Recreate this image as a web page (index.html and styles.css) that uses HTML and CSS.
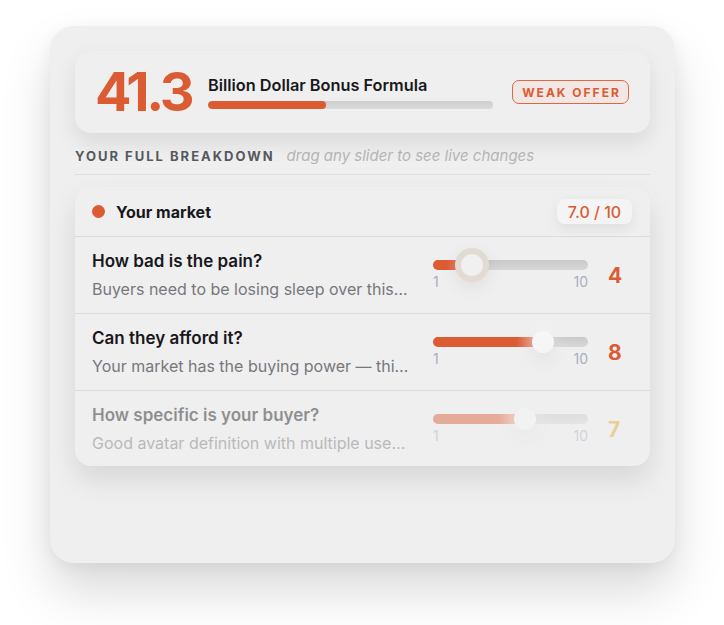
FILE: index.html
```html
<!DOCTYPE html>
<html lang="en">
<head>
<meta charset="utf-8">
<title>Billion Dollar Bonus Formula</title>
<link rel="stylesheet" href="styles.css">
</head>
<body>
<div class="page">
  <div class="panel">
    <div class="score-card">
      <div class="score">41.3</div>
      <div class="score-mid">
        <div class="score-title">Billion Dollar Bonus Formula</div>
        <div class="bar"><div class="bar-fill" style="width:41.3%"></div></div>
      </div>
      <div class="badge">WEAK OFFER</div>
    </div>

    <div class="section-head">
      <span class="section-label">YOUR FULL BREAKDOWN</span>
      <span class="section-hint">drag any slider to see live changes</span>
    </div>

    <div class="group">
      <div class="group-head">
        <span class="dot"></span>
        <span class="group-name">Your market</span>
        <span class="group-score">7.0 / 10</span>
      </div>

      <div class="row">
        <div class="row-text">
          <div class="row-title">How bad is the pain?</div>
          <div class="row-sub">Buyers need to be losing sleep over this…</div>
        </div>
        <div class="slider">
          <div class="track">
            <div class="fill" style="width:25%"></div>
            <div class="thumb thumb-active" style="left:25%"></div>
          </div>
          <div class="ticks"><span>1</span><span>10</span></div>
        </div>
        <div class="value">4</div>
      </div>

      <div class="row">
        <div class="row-text">
          <div class="row-title">Can they afford it?</div>
          <div class="row-sub">Your market has the buying power — thi…</div>
        </div>
        <div class="slider">
          <div class="track">
            <div class="fill" style="width:71%"></div>
            <div class="thumb" style="left:71%"></div>
          </div>
          <div class="ticks"><span>1</span><span>10</span></div>
        </div>
        <div class="value">8</div>
      </div>

      <div class="row row-dim">
        <div class="row-text">
          <div class="row-title">How specific is your buyer?</div>
          <div class="row-sub">Good avatar definition with multiple use…</div>
        </div>
        <div class="slider">
          <div class="track">
            <div class="fill" style="width:59.4%"></div>
            <div class="thumb" style="left:59.4%"></div>
          </div>
          <div class="ticks"><span>1</span><span>10</span></div>
        </div>
        <div class="value value-amber">7</div>
      </div>
    </div>
  </div>
</div>
</body>
</html>
```

FILE: styles.css
```css
* { box-sizing: border-box; }

html, body {
  margin: 0;
  padding: 0;
  background: #ffffff;
}

body {
  font-family: Inter, "Noto Sans", "Liberation Sans", sans-serif;
  color: #1b1b1f;
}

.page {
  padding: 26px 0 62px 50px;
}

.panel {
  width: 625px;
  height: 537px;
  background: #efefef;
  border-radius: 24px;
  padding: 25px 25px;
  box-shadow: 0 28px 50px rgba(0, 0, 0, 0.15), 0 4px 16px rgba(0, 0, 0, 0.05);
}

/* score card */
.score-card {
  height: 82px;
  display: flex;
  align-items: center;
  padding: 0 21px 0 20px;
  background: #efefef;
  border-radius: 16px;
  box-shadow: 0 10px 22px rgba(0, 0, 0, 0.09);
}

.score {
  font-size: 54px;
  font-weight: 700;
  letter-spacing: -0.06em;
  line-height: 1;
  color: #db5b33;
  width: 95px;
  white-space: nowrap;
}

.score-mid {
  flex: 1;
  margin: 0 19px 0 18px;
}

.score-title {
  font-size: 16.3px;
  font-weight: 600;
  line-height: 20px;
  color: #18181c;
}

.bar {
  margin-top: 6px;
  height: 8px;
  border-radius: 4px;
  background: linear-gradient(180deg, #cdcdcd, #dadada);
  overflow: hidden;
}

.bar-fill {
  height: 100%;
  border-radius: 4px;
  background: #db5b33;
}

.badge {
  width: 117px;
  height: 24px;
  border: 1px solid #de6744;
  border-radius: 7px;
  background: #f1e7e4;
  color: #db5b33;
  font-size: 12px;
  font-weight: 700;
  letter-spacing: 2px;
  display: flex;
  align-items: center;
  justify-content: center;
  padding-left: 2px;
}

/* section header */
.section-head {
  margin-top: 15px;
  padding-bottom: 10px;
  border-bottom: 1px solid #dedede;
  display: flex;
  align-items: baseline;
  gap: 12px;
  line-height: 16px;
}

.section-label {
  font-size: 13px;
  font-weight: 700;
  letter-spacing: 2px;
  color: #55585e;
}

.section-hint {
  font-size: 15px;
  font-style: italic;
  color: #b4b4b4;
}

/* group card */
.group {
  margin-top: 12px;
  background: #efefef;
  border-radius: 16px;
  box-shadow: 0 14px 28px rgba(0, 0, 0, 0.1);
  overflow: hidden;
}

.group-head {
  height: 50px;
  display: flex;
  align-items: center;
  padding: 0 18px 0 17px;
  border-bottom: 1px solid #dcdcdc;
}

.dot {
  width: 13px;
  height: 13px;
  border-radius: 50%;
  background: #db5b33;
  margin-right: 11px;
}

.group-name {
  font-size: 16px;
  font-weight: 700;
  color: #18181c;
  flex: 1;
}

.group-score {
  width: 75px;
  height: 25px;
  border-radius: 8px;
  background: #f4f4f4;
  box-shadow: 0 5px 14px rgba(0, 0, 0, 0.07);
  color: #db5b33;
  font-size: 16px;
  font-weight: 500;
  display: flex;
  align-items: center;
  justify-content: center;
}

.row {
  display: grid;
  grid-template-columns: 1fr 155px 24px;
  column-gap: 20px;
  align-items: center;
  padding: 14px 18px 12px 17px;
  height: 77px;
  border-bottom: 1px solid #dcdcdc;
}

.row .slider,
.row .value {
  margin-top: -2px;
}

.row:last-child {
  border-bottom: none;
  height: 75px;
}

.row-text {
  min-width: 0;
}

.row-title {
  font-size: 17px;
  font-weight: 600;
  line-height: 21px;
  color: #18181c;
  white-space: nowrap;
  overflow: hidden;
  text-overflow: ellipsis;
}

.row-sub {
  margin-top: 5px;
  font-size: 16px;
  line-height: 24px;
  color: #77777d;
  white-space: nowrap;
  overflow: hidden;
  text-overflow: ellipsis;
}

.slider {
  display: flex;
  flex-direction: column;
  gap: 4px;
}

.track {
  position: relative;
  height: 10px;
  border-radius: 5px;
  background: linear-gradient(180deg, #c9c9c9, #d8d8d8);
}

.fill {
  height: 100%;
  border-radius: 5px;
  background: linear-gradient(90deg, #db5b33 0, #db5b33 calc(100% - 26px), #eba390 100%);
}

.thumb {
  position: absolute;
  top: 50%;
  width: 22px;
  height: 22px;
  border-radius: 50%;
  background: #f6f6f6;
  transform: translate(-50%, -50%);
  box-shadow: 0 6px 18px rgba(0, 0, 0, 0.09), 0 0 20px rgba(255, 255, 255, 0.8);
}

.thumb-active {
  width: 34px;
  height: 34px;
  background: #f0f0f0;
  border: 6px solid #e2dbd3;
  box-shadow: 0 6px 18px rgba(0, 0, 0, 0.07);
}

.ticks {
  display: flex;
  justify-content: space-between;
  font-size: 14px;
  line-height: 16px;
  color: #a7afbf;
}

.value {
  font-size: 21px;
  font-weight: 700;
  color: #db5b33;
}

.value-amber {
  color: #eaa428;
}

.row-dim .row-text,
.row-dim .slider,
.row-dim .value {
  opacity: 0.45;
}
```
